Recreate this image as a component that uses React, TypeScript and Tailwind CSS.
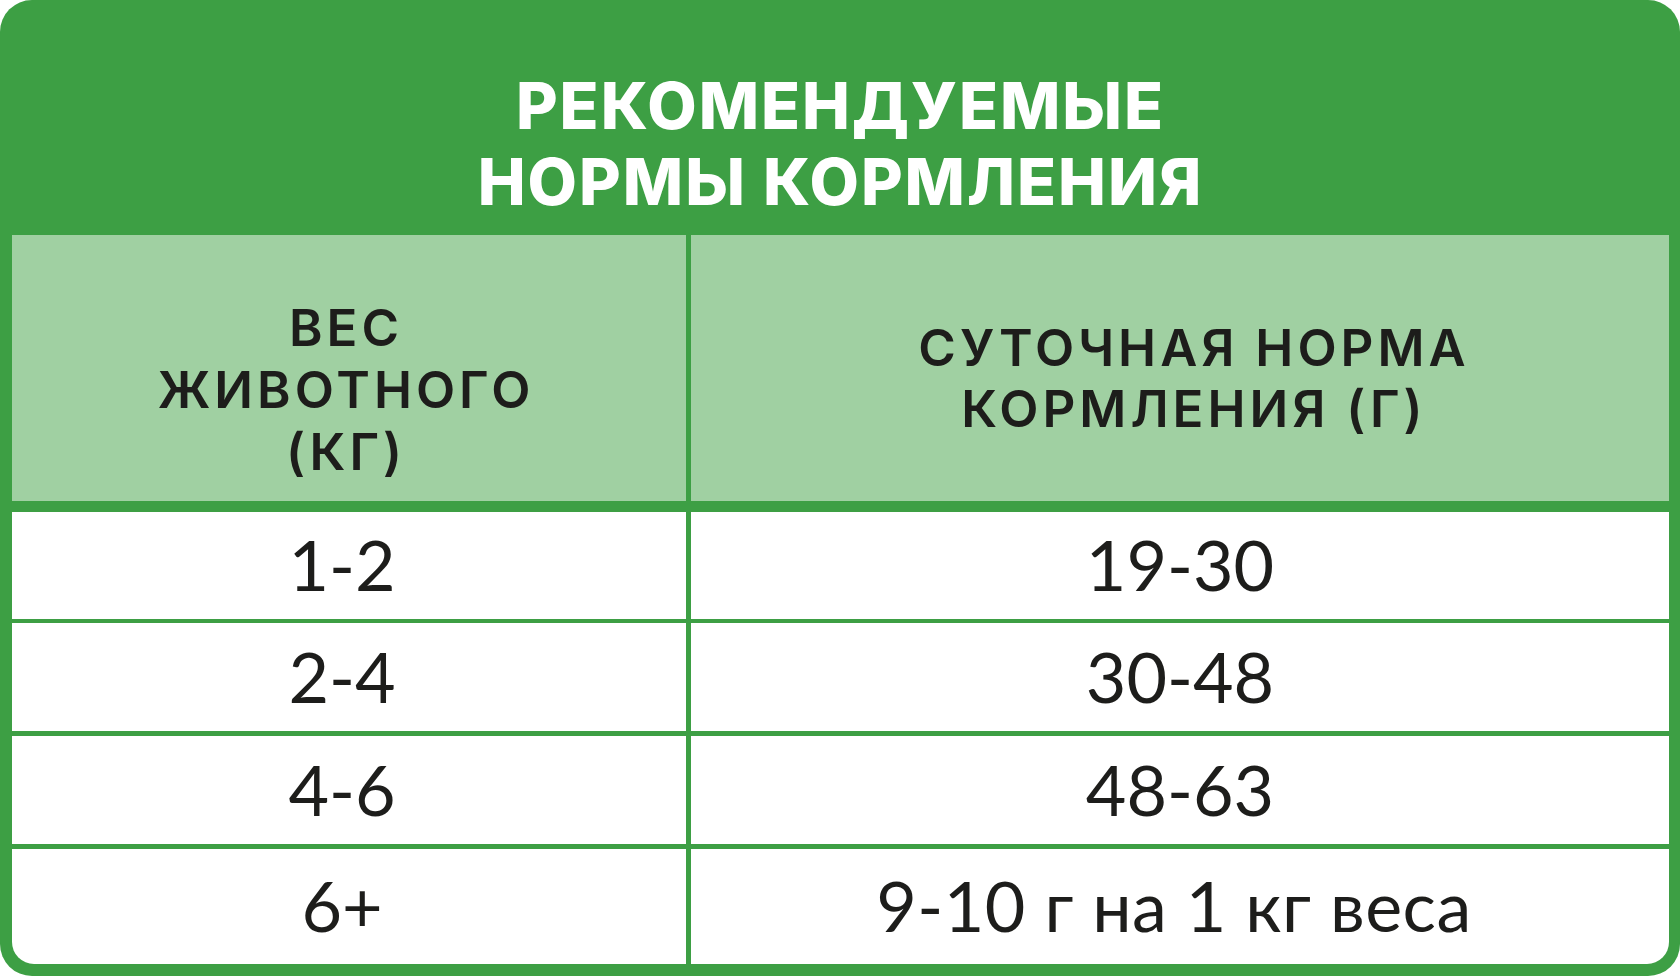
import React from 'react';

const rows = [
  { weight: '1-2', norm: '19-30', h: 'h-[106px]' },
  { weight: '2-4', norm: '30-48', h: 'h-[108px]' },
  { weight: '4-6', norm: '48-63', h: 'h-[108px]' },
  { weight: '6+', norm: '9-10 г на 1 кг веса', h: 'h-[115px]' },
];

const App = () => {
  return (
    <div className="w-[1680px] h-[976px] bg-white">
      <div className="h-full rounded-[32px] bg-[#3d9f44] px-[12px] pr-[11px] pb-[12px] flex flex-col">
        <div className="h-[235px] shrink-0 flex flex-col items-center pt-[68px] text-white font-['Inter',sans-serif] font-extrabold text-[64px] leading-[76px] tracking-[2px]">
          <div>РЕКОМЕНДУЕМЫЕ</div>
          <div>НОРМЫ КОРМЛЕНИЯ</div>
        </div>

        <div className="flex flex-col">
          <div className="grid grid-cols-[674px_978px] gap-x-[5px] h-[266px] mb-[11px]">
            <div className="bg-[#a0d0a2] flex flex-col items-center justify-center pt-[44px] pr-[6px] text-[#1d1d1b] font-['Inter',sans-serif] font-semibold text-[51px] leading-[62px] tracking-[4px] text-center">
              <div>ВЕС</div>
              <div>ЖИВОТНОГО</div>
              <div>(КГ)</div>
            </div>
            <div className="bg-[#a0d0a2] flex flex-col items-center justify-center pt-[20px] pl-[28px] text-[#1d1d1b] font-['Inter',sans-serif] font-semibold text-[51px] leading-[61px] tracking-[4px] text-center">
              <div>СУТОЧНАЯ НОРМА</div>
              <div>КОРМЛЕНИЯ (Г)</div>
            </div>
          </div>

          <div className="flex flex-col gap-y-[5px]">
            {rows.map((r, i) => (
              <div key={r.weight} className={`grid grid-cols-[674px_978px] gap-x-[5px] ${r.h}`}>
                <div
                  className={`bg-white flex items-center justify-center pr-[14px] pb-[2px] text-[#1d1d1b] font-['Lato',sans-serif] text-[70px] ${
                    i === rows.length - 1 ? 'rounded-bl-[22px]' : ''
                  }`}
                >
                  {r.weight}
                </div>
                <div
                  className={`bg-white flex items-center justify-center pb-[2px] text-[#1d1d1b] font-['Lato',sans-serif] text-[70px] ${
                    i === rows.length - 1 ? 'rounded-br-[22px] pr-[12px] tracking-[0.5px]' : ''
                  }`}
                >
                  {r.norm}
                </div>
              </div>
            ))}
          </div>
        </div>
      </div>
    </div>
  );
};

export default App;
